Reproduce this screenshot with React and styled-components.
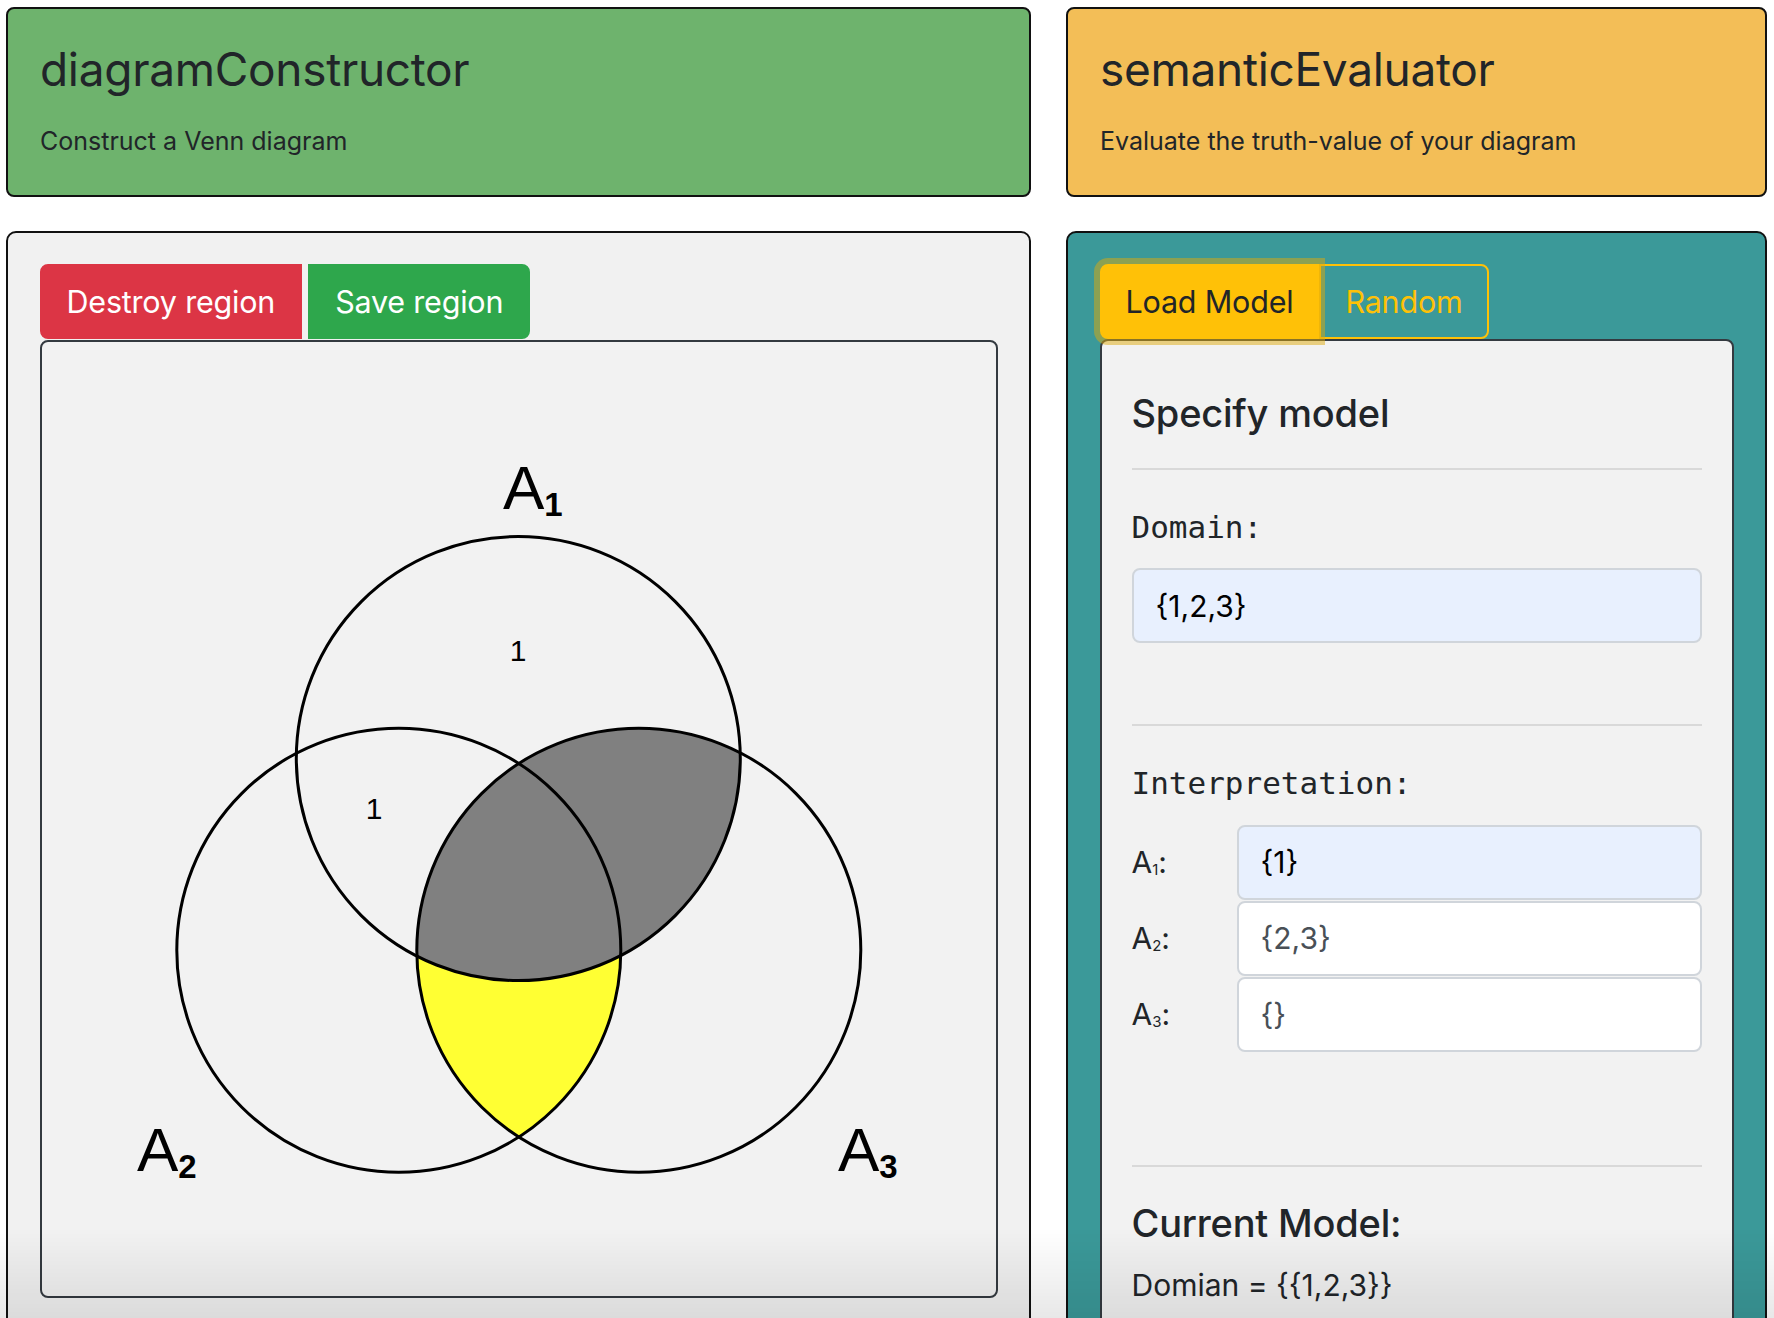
import React from 'react';
import styled, { createGlobalStyle } from 'styled-components';

const GlobalStyle = createGlobalStyle`
  html, body {
    margin: 0;
    padding: 0;
    background: #fff;
    overflow: hidden;
  }
  body {
    font-family: Inter, "Liberation Sans", sans-serif;
    color: #212529;
  }
  * {
    box-sizing: border-box;
  }
`;

const circles = {
    a1: { cx: 476.3, cy: 416.6 },
    a2: { cx: 356.8, cy: 608.3 },
    a3: { cx: 596.8, cy: 608.3 },
};
const R = 222;

const interpretation = [
    { id: 1, value: '{1}', filled: true },
    { id: 2, value: '{2,3}', filled: false },
    { id: 3, value: '{}', filled: false },
];

const VennDiagram = () => (
    <svg width="954" height="954" viewBox="0 0 954 954">
        <defs>
            <clipPath id="clipA1">
                <circle cx={circles.a1.cx} cy={circles.a1.cy} r={R} />
            </clipPath>
            <clipPath id="clipA3">
                <circle cx={circles.a3.cx} cy={circles.a3.cy} r={R} />
            </clipPath>
            <mask id="outsideA1">
                <rect x="0" y="0" width="954" height="954" fill="#fff" />
                <circle cx={circles.a1.cx} cy={circles.a1.cy} r={R} fill="#000" />
            </mask>
        </defs>

        <circle cx={circles.a3.cx} cy={circles.a3.cy} r={R} fill="#808080" clipPath="url(#clipA1)" />
        <g mask="url(#outsideA1)">
            <circle cx={circles.a2.cx} cy={circles.a2.cy} r={R} fill="#ffff33" clipPath="url(#clipA3)" />
        </g>

        {Object.entries(circles).map(([key, c]) => (
            <circle key={key} cx={c.cx} cy={c.cy} r={R} fill="none" stroke="#000" strokeWidth="3" />
        ))}

        <SetLabel x="461" y="167">A<Sub dy="7">1</Sub></SetLabel>
        <SetLabel x="95" y="829">A<Sub dy="7">2</Sub></SetLabel>
        <SetLabel x="796" y="829">A<Sub dy="7">3</Sub></SetLabel>

        <Count x="476" y="319">1</Count>
        <Count x="332" y="477">1</Count>
    </svg>
);

const App = () => {
    return (
        <>
            <GlobalStyle />
            <Page>
                <Banner $color="#6eb36d">
                    <BannerTitle>diagramConstructor</BannerTitle>
                    <BannerLead>Construct a Venn diagram</BannerLead>
                </Banner>
                <Banner $color="#f3be57">
                    <BannerTitle>semanticEvaluator</BannerTitle>
                    <BannerLead>Evaluate the truth-value of your diagram</BannerLead>
                </Banner>

                <Panel $bg="#f1f1f1">
                    <ButtonGroup $gap={6}>
                        <ActionButton $variant="danger" $side="left">Destroy region</ActionButton>
                        <ActionButton $variant="success" $side="right">Save region</ActionButton>
                    </ButtonGroup>
                    <Canvas>
                        <VennDiagram />
                    </Canvas>
                </Panel>

                <Panel $bg="#3b9999">
                    <ButtonGroup $gap={0}>
                        <ActionButton $variant="warning" $side="left" $focused $pad={24}>Load Model</ActionButton>
                        <ActionButton $variant="outlineWarning" $side="right" $pad={24}>Random</ActionButton>
                    </ButtonGroup>
                    <ModelCard>
                        <CardHeading>Specify model</CardHeading>
                        <Rule />
                        <MonoLabel>Domain:</MonoLabel>
                        <FieldInput $filled readOnly value="{1,2,3}" />
                        <Rule $top={81} />
                        <MonoLabel>Interpretation:</MonoLabel>
                        <InterpretationList>
                            {interpretation.map(row => (
                                <InterpretationRow key={row.id}>
                                    <SetName>A<sub>{row.id}</sub>:</SetName>
                                    <FieldInput $filled={row.filled} readOnly value={row.value} />
                                </InterpretationRow>
                            ))}
                        </InterpretationList>
                        <Rule $top={113} $bottom={34} />
                        <CardHeading $size={38}>Current Model:</CardHeading>
                        <ModelLine>Domian = {'{{1,2,3}}'}</ModelLine>
                    </ModelCard>
                </Panel>
            </Page>
            <BottomFade />
        </>
    );
};

const Page = styled.div`
    display: grid;
    grid-template-columns: 1025px 701px;
    column-gap: 35px;
    row-gap: 34px;
    padding: 7px 0 0 6px;
    height: 1318px;
    overflow: hidden;
`;

const Banner = styled.header`
    height: 190px;
    background: ${p => p.$color};
    border: 2px solid #111;
    border-radius: 8px;
    padding: 33px 32px 0;
`;

const BannerTitle = styled.h1`
    margin: 0;
    font-size: 46px;
    font-weight: 400;
    line-height: 1.2;
    letter-spacing: -0.3px;
`;

const BannerLead = styled.p`
    margin: 26px 0 0;
    font-size: 25px;
    font-weight: 400;
    line-height: 1.5;
`;

const Panel = styled.section`
    background: ${p => p.$bg};
    border: 2px solid #111;
    border-radius: 10px;
    padding: 31px 31px 0 31.5px;
    height: 1200px;
`;

const ButtonGroup = styled.div`
    display: flex;
    gap: ${p => p.$gap}px;
    margin-bottom: 1px;
`;

const variants = {
    danger: 'background: #dc3545; border-color: #dc3545; color: #fff;',
    success: 'background: #2ea74c; border-color: #2ea74c; color: #fff;',
    warning: 'background: #ffc107; border-color: #ffc107; color: #212529;',
    outlineWarning: 'background: transparent; border-color: #ffc107; color: #ffc107;',
};

const ActionButton = styled.button`
    position: relative;
    z-index: ${p => (p.$focused ? 2 : 1)};
    height: 75px;
    padding: 0 ${p => p.$pad || 25}px;
    font-family: Inter, "Liberation Sans", sans-serif;
    font-size: 30.5px;
    font-weight: 400;
    letter-spacing: -0.2px;
    border: 2px solid;
    border-radius: ${p => (p.$side === 'left' ? '8px 0 0 8px' : '0 8px 8px 0')};
    ${p => variants[p.$variant]}
    box-shadow: ${p => (p.$focused ? '0 0 0 6px rgba(222, 170, 12, 0.5)' : 'none')};
`;

const Canvas = styled.div`
    width: 958px;
    height: 958px;
    border: 2px solid #343a40;
    border-radius: 8px;
    background: #f2f2f2;
    svg {
        display: block;
    }
`;

const SetLabel = styled.text`
    font-family: "Liberation Sans", Arial, sans-serif;
    font-size: 62px;
    fill: #000;
`;

const Sub = styled.tspan`
    font-size: 33px;
    font-weight: 600;
`;

const Count = styled.text`
    font-family: "Liberation Sans", Arial, sans-serif;
    font-size: 30px;
    text-anchor: middle;
    fill: #000;
`;

const ModelCard = styled.div`
    width: 634px;
    height: 1000px;
    background: #f2f2f2;
    border: 2px solid #343a40;
    border-radius: 8px;
    padding: 50px 30px 0 30px;
    margin-top: -1px;
`;

const CardHeading = styled.h3`
    margin: 0;
    font-size: ${p => p.$size || 38}px;
    font-weight: 500;
    line-height: 1.2;
    letter-spacing: -0.2px;
`;

const Rule = styled.hr`
    margin: ${p => p.$top || 31}px 0 ${p => p.$bottom || 34}px;
    border: 0;
    border-top: 2px solid #d9d9d9;
`;

const MonoLabel = styled.div`
    font-family: "DejaVu Sans Mono", "Liberation Mono", monospace;
    font-size: 31px;
    line-height: 1.5;
    margin-bottom: 18px;
`;

const FieldInput = styled.input`
    display: block;
    width: 100%;
    height: 75px;
    padding: 0 22px;
    font-family: Inter, "Liberation Sans", sans-serif;
    font-size: 30px;
    color: ${p => (p.$filled ? '#000' : '#495057')};
    background: ${p => (p.$filled ? '#e8f0fe' : '#fff')};
    border: 2px solid #d0d5db;
    border-radius: 8px;
    outline: none;
`;

const InterpretationList = styled.div`
    display: flex;
    flex-direction: column;
    gap: 1px;
`;

const InterpretationRow = styled.div`
    display: grid;
    grid-template-columns: 105px 1fr;
    align-items: center;
`;

const SetName = styled.span`
    font-size: 30px;
    sub {
        font-size: 15px;
        vertical-align: -2px;
    }
`;

const ModelLine = styled.p`
    margin: 17px 0 0;
    font-size: 30px;
    line-height: 1.5;
`;

const BottomFade = styled.div`
    position: fixed;
    left: 0;
    right: 0;
    bottom: 0;
    height: 90px;
    pointer-events: none;
    background: linear-gradient(to bottom, rgba(0, 0, 0, 0), rgba(0, 0, 0, 0.09));
`;

export default App;
